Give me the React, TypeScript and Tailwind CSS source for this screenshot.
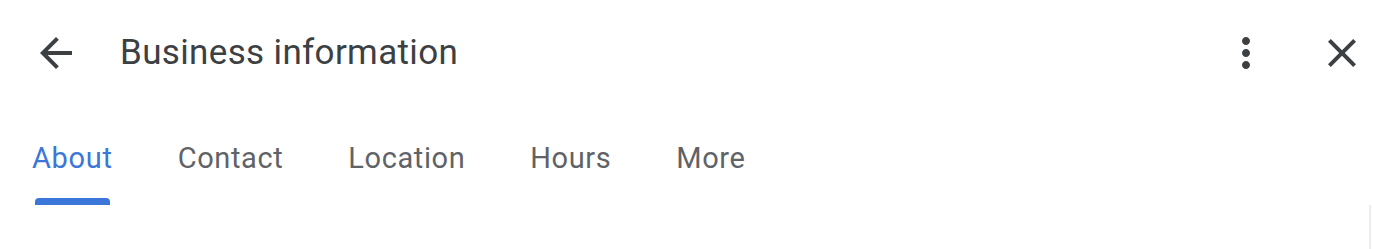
import { useState } from "react";

const tabs = ["About", "Contact", "Location", "Hours", "More"];

const Icon = ({ d }: { d: string }) => (
  <svg viewBox="0 0 24 24" className="w-12 h-12 fill-[#3c4043]">
    <path d={d} />
  </svg>
);

const App = () => {
  const [active, setActive] = useState(0);

  return (
    <div className="w-[1373px] h-[249px] bg-white overflow-hidden font-['Roboto',sans-serif]">
      <div className="h-[106px] flex items-center pl-8 pr-[7px]">
        <button className="w-12 h-12 flex items-center justify-center">
          <Icon d="M20 11H7.83l5.59-5.59L12 4l-8 8 8 8 1.41-1.41L7.83 13H20v-2z" />
        </button>
        <h1 className="ml-10 text-[35px] leading-[40px] tracking-[0.35px] text-[#3c4043]">
          Business information
        </h1>
        <button className="ml-auto w-12 h-12 flex items-center justify-center">
          <Icon d="M12 8c1.1 0 2-.9 2-2s-.9-2-2-2-2 .9-2 2 .9 2 2 2zm0 2c-1.1 0-2 .9-2 2s.9 2 2 2 2-.9 2-2-.9-2-2-2zm0 6c-1.1 0-2 .9-2 2s.9 2 2 2 2-.9 2-2-.9-2-2-2z" />
        </button>
        <button className="ml-12 w-12 h-12 flex items-center justify-center">
          <Icon d="M19 6.41L17.59 5 12 10.59 6.41 5 5 6.41 10.59 12 5 17.59 6.41 19 12 13.41 17.59 19 19 17.59 13.41 12z" />
        </button>
      </div>
      <div className="flex gap-[65px] pl-8 pt-[34px]">
        {tabs.map(function (tab, index) {
          const on = index === active;
          return (
            <button
              key={tab}
              onClick={() => setActive(index)}
              className="flex flex-col"
            >
              <span
                className={
                  on
                    ? "text-[29px] leading-[36px] tracking-[0.7px] text-[#3b77d8]"
                    : "text-[29px] leading-[36px] tracking-[0.6px] text-[#5f6368]"
                }
              >
                {tab}
              </span>
              <span
                className={
                  on
                    ? "mt-[22px] mx-[3px] h-[7px] rounded-t-[4px] bg-[#3b77d8]"
                    : "mt-[22px] mx-[3px] h-[7px]"
                }
              />
            </button>
          );
        })}
      </div>
      <div className="flex h-[44px]">
        <div className="ml-auto mr-[2px] w-[2px] h-full bg-[#ececec]" />
      </div>
    </div>
  );
};

export default App;
